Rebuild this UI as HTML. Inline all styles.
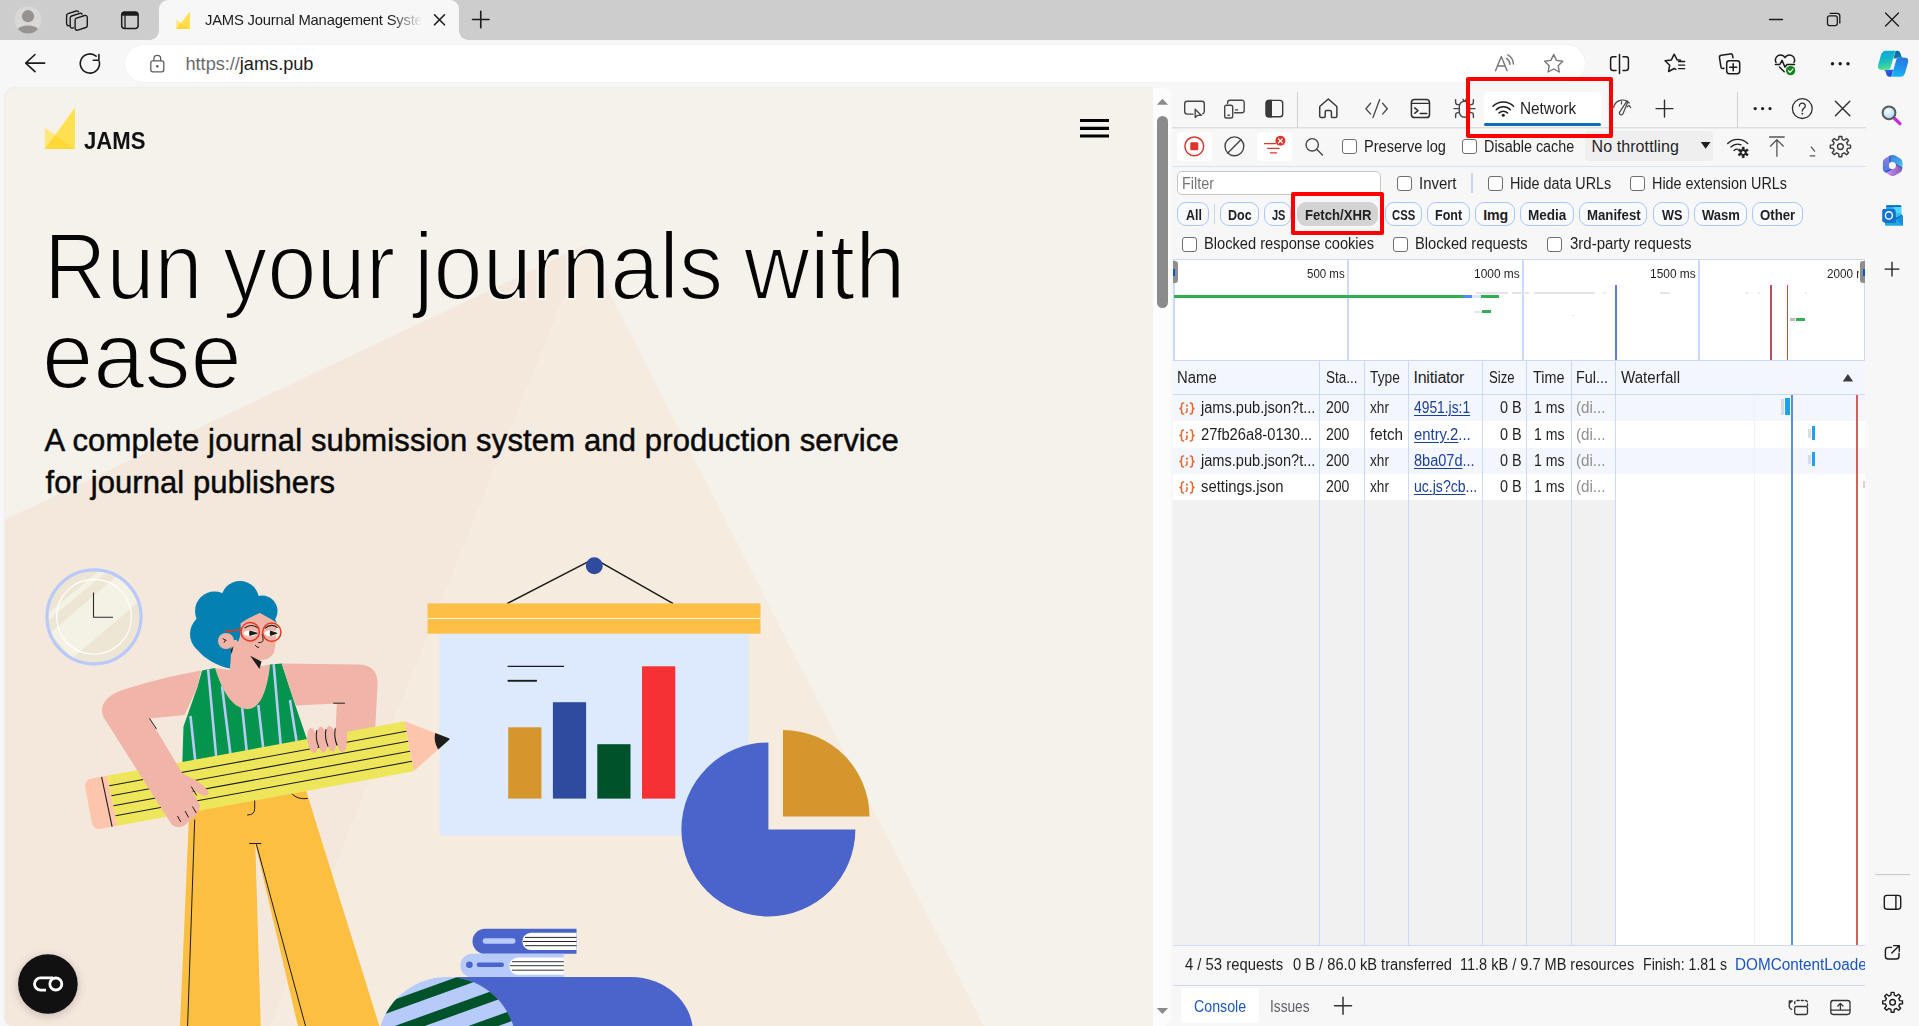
<!DOCTYPE html>
<html lang="en">
<head>
<meta charset="utf-8">
<title>JAMS Journal Management System</title>
<style>
*{box-sizing:border-box;margin:0;padding:0}
html,body{width:1919px;height:1026px;overflow:hidden;background:#f7f7f7;font-family:"Liberation Sans",sans-serif;color:#1b1b1b}
.abs{position:absolute}
svg{position:absolute;overflow:visible}
.ic{fill:none;stroke:#1b1b1b;stroke-width:1.5;stroke-linecap:round;stroke-linejoin:round}
#tabbar{left:0;top:0;width:1919px;height:40px;background:#cdcdcd}
#tab{left:159px;top:0;width:300px;height:40px;background:#f7f7f7;border-radius:9px 9px 0 0}
#tab:before,#tab:after{content:"";position:absolute;bottom:0;width:9px;height:9px;background:radial-gradient(circle at 0 0,#cdcdcd 8.5px,#f7f7f7 9px)}
#tab:before{left:-9px}
#tab:after{right:-9px;background:radial-gradient(circle at 100% 0,#cdcdcd 8.5px,#f7f7f7 9px)}
#toolbar{left:0;top:40px;width:1919px;height:48px;background:#f7f7f7}
#addr{left:125px;top:45px;width:1460px;height:37px;border-radius:18.5px;background:#fff;box-shadow:0 0 2px rgba(0,0,0,.06)}
/* page */
#page{left:5px;top:88px;width:1148.200px;height:938px;background:#f5f1eb;border-radius:10px 0 0 8px;overflow:hidden;box-shadow:0 0 2px rgba(0,0,0,.13)}
#vscroll{left:1153px;top:88px;width:18.200px;height:938px;background:#fcfcfc;border-radius:0 8px 8px 0}
#thumb{left:1157px;top:116px;width:11px;height:192px;border-radius:5.500px;background:#8b8b8b}
/* devtools */
.tx{position:absolute;white-space:nowrap}
.tx u{text-decoration-thickness:1px;text-underline-offset:2px}
.cb{position:absolute;width:15px;height:15px;border:1.300px solid #6f6f6f;border-radius:3px;background:#fff}
#side{left:1866px;top:88px;width:53px;height:938px;background:#f7f7f7}
</style>
</head>
<body>
<div id="tabbar" class="abs"></div>
<div id="tab" class="abs"></div>
<div id="toolbar" class="abs"></div>
<div id="addr" class="abs"></div>
<span id="t78" class="tx " style="left:205.00px;top:9.8px;font-size:14.8px;line-height:20px;color:#1b1b1b;font-weight:400;letter-spacing:-0.21px;-webkit-mask-image:linear-gradient(90deg,#000 186px,transparent 217px);mask-image:linear-gradient(90deg,#000 186px,transparent 217px);width:219px;overflow:hidden;">JAMS Journal Management System</span>
<span id="t79" class="tx " style="left:185.50px;top:51.7px;font-size:18.2px;line-height:24px;color:#1b1b1b;font-weight:400;letter-spacing:-0.03px;"><span style="color:#6b6b6b">https://</span>jams.pub</span>

<div id="page" class="abs">
<svg class="abs" style="left:-5px;top:-88px" width="1157" height="1026" viewBox="0 0 1157 1026">
<defs>
<filter id="blur5" x="-50%" y="-50%" width="200%" height="200%"><feGaussianBlur stdDeviation="5"/></filter>
<clipPath id="ckc"><circle cx="94" cy="616.800" r="46"/></clipPath>
<clipPath id="ballc"><circle cx="447" cy="1046.500" r="69.500"/></clipPath>
<clipPath id="tankc"><path d="M202 670.400L215 668C222 690 232 709 247.800 709C262 709 268 685 270 664.600L281.700 663.400L289 686L295.500 705.700L307.400 740.600L182.300 763L183.500 726.500L197.500 686.800Z"/></clipPath>
</defs>
<!-- pyramid background -->
<path d="M585 245L0 522V1026H271Z" fill="#f4e8dd"/>
<path d="M585 245L271 1026H984Z" fill="#f5ecdf"/>
<!-- clock -->
<circle cx="94" cy="616.800" r="47" fill="#ede6d5"/>
<g clip-path="url(#ckc)" fill="#f4f1e5"><path d="M40 620L105 566L108.500 570L43.500 624.500Z"/><path d="M50 633L118 575L141 600L72 658.500Z"/></g>
<circle cx="94" cy="616.800" r="47" fill="none" stroke="#b9c9fa" stroke-width="3.200"/>
<circle cx="94" cy="616.800" r="37.400" fill="none" stroke="#fff" stroke-width="1.100"/>
<path d="M93.500 592.600V617.200H113" fill="none" stroke="#2a2a2a" stroke-width="1.100"/>
<!-- board -->
<path d="M507 603.600L594.200 558.600L673.200 603.600" stroke="#1d1d1b" stroke-width="1.600" fill="none" stroke-linejoin="round"/>
<circle cx="594.300" cy="565.700" r="8.500" fill="#2e4ba0"/>
<rect x="439.600" y="630" width="308.800" height="205.500" fill="#dde9fd"/>
<rect x="427.500" y="603.400" width="333" height="30.300" fill="#fdbf45"/>
<rect x="427.500" y="618" width="333" height="1.100" fill="#fff6df"/>
<path d="M507.600 666.300H564.100" stroke="#1d1d1b" stroke-width="1.300"/><path d="M507.600 680.800H536.900" stroke="#1d1d1b" stroke-width="1.900"/>
<rect x="508.200" y="727.300" width="33.200" height="71.300" fill="#d6962e"/>
<rect x="552.900" y="702.200" width="33.200" height="96.400" fill="#2e4ba0"/>
<rect x="597.300" y="744.200" width="33.200" height="54.400" fill="#00522a"/>
<rect x="642" y="666.300" width="33.300" height="132.300" fill="#f63134"/>
<!-- pie -->
<path d="M768.400 829.400V742.400A87 87 0 1 0 855.400 829.400Z" fill="#4a64cc"/>
<path d="M783 816.500V730A86.500 86.500 0 0 1 869.500 816.500Z" fill="#d6962e"/>
<!-- blue mound + books + ball -->
<path d="M455 977.100H631A62 56 0 0 1 693 1033H455Z" fill="#4a64cc"/>
<circle cx="447" cy="1046.500" r="69.500" fill="#b6cbfa"/>
<g clip-path="url(#ballc)" fill="#00522a">
<path d="M360 1012L520 954.400V965.400L360 1023Z"/>
<path d="M360 1038.500L520 980.900V991.700L360 1049.300Z"/>
<path d="M360 1065L520 1007.400V1018.200L360 1075.800Z"/>
</g>
<path d="M485 928.800H576.500V953.800H485A12.500 12.500 0 0 1 485 928.800Z" fill="#4a64cc"/>
<rect x="482.700" y="938.300" width="32.800" height="5.400" rx="2.700" fill="#b6cbfa"/>
<path d="M531 932.800H576.500V950.100H531A8.650 8.650 0 0 1 531 932.800Z" fill="#fff"/>
<path d="M525 937.400H576.500M523 941.500H576.500M525 945.700H576.500" stroke="#222" stroke-width="1"/>
<path d="M472 953.800H563.700V977.100H472A11.650 11.650 0 0 1 472 953.800Z" fill="#b6cbfa"/>
<circle cx="469.400" cy="964.700" r="3.300" fill="#4a64cc"/>
<rect x="476.700" y="962.500" width="27.300" height="4.400" rx="2.200" fill="#4a64cc"/>
<path d="M518 957.400H563.700V974.700H518A8.650 8.650 0 0 1 518 957.400Z" fill="#fff"/>
<path d="M512 961.700H563.700M510 965.700H563.700M512 970.200H563.700" stroke="#333" stroke-width="1"/>
<!-- pants -->
<path d="M189 795L301.200 775L379.400 1026H297.900L255.300 844L260.700 1026H179.900L188.800 820.800Z" fill="#fdbf41"/>
<path d="M194.700 819.600L187.600 1026M249.200 843.500H261.200M256.400 844.300L305.500 1026M254.700 800v8.500q0 6.500-7.500 6.500M290.700 792.500q6 7.500 17 6" stroke="#1d1d1b" stroke-width="1" fill="none"/>
<!-- hair back -->
<g fill="#0580b2">
<circle cx="214.500" cy="611" r="19.500"/><circle cx="240" cy="600" r="19"/><circle cx="262" cy="611" r="15.500"/><circle cx="211" cy="634" r="21"/>
<path d="M196 648C205 660 218 666 230 668.500L236 640L250 600L200 620Z"/>
</g>
<!-- neck + face -->
<path d="M231.800 640L230 670L215 668C222 690 232 709 247.800 709C262 709 268 685 270 664.600L259.800 666.500L259 660C266 661 272 657 274 652C276 646 275.500 640 276 634L276.300 622L259.800 612.800L240 622L236 640Z" fill="#f0b5a8"/>
<circle cx="226" cy="641" r="8" fill="#f0b5a8"/>
<path d="M222.500 638.500l4 2.200M225.500 639.800l-1.500 3" stroke="#1d1d1b" stroke-width=".9" fill="none"/>
<!-- hair front -->
<path d="M277 623C270 618 264 615 259.800 612.800C252 616 245 620 240.500 623.500C241 630 241 636 238 642L232 634L228 620L245 604L268 606Z" fill="#0580b2"/>
<!-- face details -->
<path d="M250.200 655.800L261.500 661.500L259.500 669Z" fill="#1d1d1b"/>
<path d="M233.600 646.100L231.600 654.200L230.700 649.800Z" fill="#1d1d1b"/>
<ellipse cx="250.400" cy="633.300" rx="6.800" ry="2.900" fill="#fff"/><ellipse cx="270.800" cy="633.300" rx="6.400" ry="2.900" fill="#fff"/>
<path d="M249.600 630.500Q248.600 633.300 249.600 636.100L257.300 633.700Q257.800 633.200 257.200 632.700Z" fill="#1d1d1b"/><path d="M270.200 630.500Q269.200 633.300 270.200 636.100L277 633.700Q277.500 633.200 276.900 632.700Z" fill="#1d1d1b"/>
<path d="M244.500 628.200Q250.800 622.800 258.600 628.400M264.900 628.400Q271.200 622.800 277.600 627.800" stroke="#1d1d1b" stroke-width="1.100" fill="none"/>
<path d="M262 633.800Q264 640.300 262.400 641.600Q260.600 642.900 258.300 642.600M255.100 645.100q1.800 2.500 3.900 2.300" stroke="#1d1d1b" stroke-width="1" fill="none"/>
<g fill="none" stroke="#e33a22" stroke-width="1.500"><circle cx="250.200" cy="631.700" r="9.200"/><circle cx="271.800" cy="632.200" r="9.200"/><path d="M225 631.400L241.200 629.600"/></g>
<!-- tank top -->
<path d="M202 670.400L215 668C222 690 232 709 247.800 709C262 709 268 685 270 664.600L281.700 663.400L289 686L295.500 705.700L307.400 740.600L182.300 763L183.500 726.500L197.500 686.800Z" fill="#04944d"/>
<g clip-path="url(#tankc)" stroke="#b9c9fa" stroke-width="2.600" fill="none">
<path d="M208 668L216.400 759M222 686L230.400 754M241.900 705L246.800 752M258.300 705L263.200 748M273.500 662L280.700 745M290 700L296.500 741M190.500 716L195.300 761"/>
</g>
<!-- arms -->
<path d="M281.700 663.400L358 664.400Q377.600 664.600 377.600 683.300L375.300 728L335.500 736L336.700 703.600L296 705.500L289 686Z" fill="#f0b5a8"/>
<path d="M333.200 703.200H344.900" stroke="#1d1d1b" stroke-width="1" fill="none"/>
<!-- pencil -->
<g transform="translate(101.600 776.800) rotate(-10.400)">
<path d="M5.500 0H-10Q-18 0 -18 8V43Q-18 51 -10 51H6.800Z" fill="#fdc5ab"/>
<path d="M5.500 0H308V51H6.800Z" fill="#ede55a"/>
<path d="M308 0L349.500 25.500L308 51Z" fill="#fdc5ab"/>
<path d="M336 17.200L348.600 24.700Q349.800 25.500 348.600 26.300L336 33.800Q332.500 25.500 336 17.200Z" fill="#1d1d1b"/>
<path d="M0 0L1.300 51M6 10.200H308M6.200 20.400H308M6.500 30.600H308M6.700 40.800H308" stroke="#1d1d1b" stroke-width="1.100" fill="none"/>
</g>
<!-- hands over pencil -->
<path d="M201 670.400C170 676 140 684 121.500 690.300C106 696 98 706 104 718L170 822C173 828 181 829 186 824L197.500 814.300L200 806L192 790L203 795.500C206 796.500 209.500 795 208.500 792C206 787 198 781 191.600 778L182.300 773.300L149.500 718.400L184.600 714.900L197.500 686.800Z" fill="#f0b5a8"/>
<path d="M149.500 718.400L156.500 728.900M191.200 786.500l5.500 9M177.500 816l3.300 6M185 811l3.600 6.500M192.500 806.500l3.800 6.500" stroke="#1d1d1b" stroke-width="1" fill="none"/>
<g fill="#f0b5a8">
<ellipse cx="312.600" cy="740.600" rx="5.100" ry="12.800" transform="rotate(-8 312.600 740.600)"/>
<ellipse cx="322.200" cy="739.600" rx="5.200" ry="12.900" transform="rotate(-8 322.200 739.600)"/>
<ellipse cx="331" cy="738.700" rx="5.200" ry="12.900" transform="rotate(-8 331 738.700)"/>
<path d="M334.500 727.500L346 726C347.500 734 347.800 742 345.500 749C344.500 752.500 340.500 753 338.800 749.500C336.800 744 335.500 736 334.500 727.500Z"/>
</g>
<path d="M316.800 730.200q-1.700 8.700 2.100 17.200M326 729.200q-1.700 8.700 2.100 17.200M335.300 728.500q-1.700 8.700 1.900 17" stroke="#1d1d1b" stroke-width="1.100" fill="none"/>
<!-- cookie button -->
<circle cx="47.900" cy="986" r="30" fill="#5a4030" opacity=".28" filter="url(#blur5)"/>
<circle cx="47.900" cy="984" r="29.800" fill="#111"/>
<circle cx="55.800" cy="984" r="6" fill="none" stroke="#fff" stroke-width="2.800"/>
<path d="M53 977.900H40.600a6.100 6.100 0 0 0 0 12.200H46" fill="none" stroke="#fff" stroke-width="2.800"/>
<!-- logo -->
<path d="M75 107.400V148.900H44.900Z" fill="#fee050"/>
<path d="M44.900 127.800V148.900H75Z" fill="#ffe877"/>
<path d="M44.900 148.900L55.040 134.900L75 148.900Z" fill="#ffd737"/>
<!-- hamburger -->
<path d="M1080 120.550H1109M1080 128.400H1109M1080 136.050H1109" stroke="#000" stroke-width="3.100"/>
</svg>

</div>
<span id="t70" class="tx h1" style="left:44.47px;top:204.1px;font-size:94px;line-height:126px;color:#050505;font-weight:400;letter-spacing:0px;transform:scaleX(0.9191);transform-origin:0 50%;-webkit-text-stroke:2.2px #f5f1eb;">Run</span>
<span id="t71" class="tx h1" style="left:222.70px;top:204.1px;font-size:94px;line-height:126px;color:#050505;font-weight:400;letter-spacing:0px;transform:scaleX(0.9413);transform-origin:0 50%;-webkit-text-stroke:2.2px #f5f1eb;">your</span>
<span id="t72" class="tx h1" style="left:413.72px;top:204.1px;font-size:94px;line-height:126px;color:#050505;font-weight:400;letter-spacing:0px;transform:scaleX(0.9387);transform-origin:0 50%;-webkit-text-stroke:2.2px #f5f1eb;">journals</span>
<span id="t73" class="tx h1" style="left:744.27px;top:204.1px;font-size:94px;line-height:126px;color:#050505;font-weight:400;letter-spacing:0px;transform:scaleX(0.9669);transform-origin:0 50%;-webkit-text-stroke:2.2px #f5f1eb;">with</span>
<span id="t74" class="tx h1" style="left:41.98px;top:293.3px;font-size:94px;line-height:126px;color:#050505;font-weight:400;letter-spacing:0px;transform:scaleX(0.9804);transform-origin:0 50%;-webkit-text-stroke:2.2px #f5f1eb;">ease</span>
<span id="t75" class="tx " style="left:44.60px;top:419.8px;font-size:31px;line-height:42px;color:#0a0a0a;font-weight:400;letter-spacing:0.14px;-webkit-text-stroke:.5px #0a0a0a;">A complete journal submission system and production service</span>
<span id="t76" class="tx " style="left:45.60px;top:462.3px;font-size:31px;line-height:42px;color:#0a0a0a;font-weight:400;letter-spacing:0.08px;-webkit-text-stroke:.5px #0a0a0a;">for journal publishers</span>
<span id="t77" class="tx " style="left:83.60px;top:124.9px;font-size:24.2px;line-height:32px;color:#111;font-weight:700;letter-spacing:0px;transform:scaleX(0.914);transform-origin:0 50%;">JAMS</span>
<div id="vscroll" class="abs"></div>
<div id="thumb" class="abs"></div>
<svg class="abs" style="left:0;top:0" width="1919" height="1026"><path d="M1156.800 104.800h11.300l-5.650-6z M1156.800 1008h11.300l-5.650 6z" fill="#8b8b8b"/></svg>

<div class="abs" style="left:1172.0px;top:88.0px;width:694.0px;height:938.0px;background:#f7f7f7;border-radius:8px 0 0 0"></div>
<div class="abs" style="left:1172.0px;top:127.0px;width:694.0px;height:1.0px;background:#dcdcdc;"></div>
<div class="abs" style="left:1172.0px;top:128.0px;width:694.0px;height:1.0px;background:#ececec;"></div>
<div class="abs" style="left:1297.0px;top:92.0px;width:1.0px;height:35.0px;background:#d0d0d0;"></div>
<div class="abs" style="left:1737.0px;top:92.0px;width:1.0px;height:35.0px;background:#d0d0d0;"></div>
<div class="abs" style="left:1484.0px;top:91.5px;width:117.0px;height:34.5px;background:#fff;border-radius:4px 4px 0 0"></div>
<div class="abs" style="left:1484.0px;top:123.0px;width:117.0px;height:3.0px;background:#0f6cbd;border-radius:2px"></div>
<span id="t0" class="tx " style="left:1520.34px;top:98.2px;font-size:16px;line-height:21px;color:#1f1f1f;font-weight:400;letter-spacing:0px;transform:scaleX(0.958);transform-origin:0 50%;">Network</span>
<div class="abs" style="left:1172.0px;top:166.0px;width:694.0px;height:1.0px;background:#d3e3fd;"></div>
<div class="abs" style="left:1177.0px;top:131.5px;width:35.0px;height:29.0px;background:#fff;border-radius:4px"></div>
<div class="abs" style="left:1257.0px;top:131.5px;width:35.0px;height:29.0px;background:#fff;border-radius:4px"></div>
<div class="cb" style="left:1342.1px;top:139.1px"></div>
<span id="t1" class="tx " style="left:1364.29px;top:135.8px;font-size:16px;line-height:21px;color:#1f1f1f;font-weight:400;letter-spacing:0px;transform:scaleX(0.912);transform-origin:0 50%;">Preserve log</span>
<div class="cb" style="left:1462.1px;top:139.1px"></div>
<span id="t2" class="tx " style="left:1484.40px;top:135.8px;font-size:16px;line-height:21px;color:#1f1f1f;font-weight:400;letter-spacing:0px;transform:scaleX(0.898);transform-origin:0 50%;">Disable cache</span>
<div class="abs" style="left:1585.0px;top:131.0px;width:128.0px;height:30.0px;background:#efefef;border-radius:4px"></div>
<span id="t3" class="tx " style="left:1591.50px;top:135.8px;font-size:16px;line-height:21px;color:#1f1f1f;font-weight:400;letter-spacing:0.09px;">No throttling</span>
<svg class="abs" style="left:0;top:0" width="1919" height="300"><path d="M1700.800 142h9.700l-4.850 6.800z" fill="#1f1f1f"/></svg>
<div class="abs" style="left:1177.3px;top:171.0px;width:203.7px;height:24.0px;background:#fff;border:1px solid #c4c7c5;border-radius:5px"></div>
<span id="t4" class="tx " style="left:1181.70px;top:173.2px;font-size:16px;line-height:21px;color:#757575;font-weight:400;letter-spacing:0px;transform:scaleX(0.900);transform-origin:0 50%;">Filter</span>
<div class="cb" style="left:1396.9px;top:176.0px"></div>
<span id="t5" class="tx " style="left:1419.26px;top:172.8px;font-size:16px;line-height:21px;color:#1f1f1f;font-weight:400;letter-spacing:0px;transform:scaleX(0.938);transform-origin:0 50%;">Invert</span>
<div class="abs" style="left:1471.3px;top:173.0px;width:1.3px;height:20.0px;background:#c5d6f5;"></div>
<div class="cb" style="left:1487.9px;top:176.0px"></div>
<span id="t6" class="tx " style="left:1509.70px;top:172.8px;font-size:16px;line-height:21px;color:#1f1f1f;font-weight:400;letter-spacing:0px;transform:scaleX(0.896);transform-origin:0 50%;">Hide data URLs</span>
<div class="cb" style="left:1629.9px;top:176.0px"></div>
<span id="t7" class="tx " style="left:1652.40px;top:172.8px;font-size:16px;line-height:21px;color:#1f1f1f;font-weight:400;letter-spacing:0px;transform:scaleX(0.898);transform-origin:0 50%;">Hide extension URLs</span>
<div class="abs" style="left:1177.3px;top:202.4px;width:31.4px;height:24.0px;background:#f9fafd;border:1px solid #a8c7fa;border-radius:9px"></div>
<span id="t8" class="tx pill" style="left:1185.50px;top:205.8px;font-size:14.2px;line-height:19px;color:#1f1f1f;font-weight:700;letter-spacing:0px;transform:scaleX(0.879);transform-origin:0 50%;">All</span>
<div class="abs" style="left:1220.2px;top:202.4px;width:38.6px;height:24.0px;background:#f9fafd;border:1px solid #a8c7fa;border-radius:9px"></div>
<span id="t9" class="tx pill" style="left:1228.00px;top:205.8px;font-size:14.2px;line-height:19px;color:#1f1f1f;font-weight:700;letter-spacing:0px;transform:scaleX(0.881);transform-origin:0 50%;">Doc</span>
<div class="abs" style="left:1264.3px;top:202.4px;width:27.0px;height:24.0px;background:#f9fafd;border:1px solid #a8c7fa;border-radius:9px"></div>
<span id="t10" class="tx pill" style="left:1271.80px;top:205.8px;font-size:14.2px;line-height:19px;color:#1f1f1f;font-weight:700;letter-spacing:0px;transform:scaleX(0.776);transform-origin:0 50%;">JS</span>
<div class="abs" style="left:1297.1px;top:202.4px;width:81.4px;height:24.0px;background:#d3d3d3;border-radius:9px"></div>
<span id="t11" class="tx pill" style="left:1305.30px;top:205.8px;font-size:14.2px;line-height:19px;color:#1f1f1f;font-weight:700;letter-spacing:0px;transform:scaleX(0.926);transform-origin:0 50%;">Fetch/XHR</span>
<div class="abs" style="left:1385.2px;top:202.4px;width:36.5px;height:24.0px;background:#f9fafd;border:1px solid #a8c7fa;border-radius:9px"></div>
<span id="t12" class="tx pill" style="left:1391.60px;top:205.8px;font-size:14.2px;line-height:19px;color:#1f1f1f;font-weight:700;letter-spacing:0px;transform:scaleX(0.794);transform-origin:0 50%;">CSS</span>
<div class="abs" style="left:1427.2px;top:202.4px;width:42.5px;height:24.0px;background:#f9fafd;border:1px solid #a8c7fa;border-radius:9px"></div>
<span id="t13" class="tx pill" style="left:1435.40px;top:205.8px;font-size:14.2px;line-height:19px;color:#1f1f1f;font-weight:700;letter-spacing:0px;transform:scaleX(0.881);transform-origin:0 50%;">Font</span>
<div class="abs" style="left:1475.0px;top:202.4px;width:39.7px;height:24.0px;background:#f9fafd;border:1px solid #a8c7fa;border-radius:9px"></div>
<span id="t14" class="tx pill" style="left:1483.30px;top:205.8px;font-size:14.2px;line-height:19px;color:#1f1f1f;font-weight:700;letter-spacing:-0.23px;">Img</span>
<div class="abs" style="left:1520.2px;top:202.4px;width:53.5px;height:24.0px;background:#f9fafd;border:1px solid #a8c7fa;border-radius:9px"></div>
<span id="t15" class="tx pill" style="left:1528.00px;top:205.8px;font-size:14.2px;line-height:19px;color:#1f1f1f;font-weight:700;letter-spacing:0px;transform:scaleX(0.955);transform-origin:0 50%;">Media</span>
<div class="abs" style="left:1579.4px;top:202.4px;width:68.1px;height:24.0px;background:#f9fafd;border:1px solid #a8c7fa;border-radius:9px"></div>
<span id="t16" class="tx pill" style="left:1587.20px;top:205.8px;font-size:14.2px;line-height:19px;color:#1f1f1f;font-weight:700;letter-spacing:0px;transform:scaleX(0.932);transform-origin:0 50%;">Manifest</span>
<div class="abs" style="left:1653.3px;top:202.4px;width:35.3px;height:24.0px;background:#f9fafd;border:1px solid #a8c7fa;border-radius:9px"></div>
<span id="t17" class="tx pill" style="left:1661.60px;top:205.8px;font-size:14.2px;line-height:19px;color:#1f1f1f;font-weight:700;letter-spacing:0px;transform:scaleX(0.893);transform-origin:0 50%;">WS</span>
<div class="abs" style="left:1694.4px;top:202.4px;width:52.4px;height:24.0px;background:#f9fafd;border:1px solid #a8c7fa;border-radius:9px"></div>
<span id="t18" class="tx pill" style="left:1702.10px;top:205.8px;font-size:14.2px;line-height:19px;color:#1f1f1f;font-weight:700;letter-spacing:0px;transform:scaleX(0.920);transform-origin:0 50%;">Wasm</span>
<div class="abs" style="left:1752.2px;top:202.4px;width:50.5px;height:24.0px;background:#f9fafd;border:1px solid #a8c7fa;border-radius:9px"></div>
<span id="t19" class="tx pill" style="left:1759.90px;top:205.8px;font-size:14.2px;line-height:19px;color:#1f1f1f;font-weight:700;letter-spacing:0px;transform:scaleX(0.932);transform-origin:0 50%;">Other</span>
<div class="abs" style="left:1214.0px;top:204.0px;width:1.0px;height:20.0px;background:#c5d6f5;"></div>
<div class="cb" style="left:1181.6px;top:237.1px"></div>
<span id="t20" class="tx " style="left:1204.29px;top:233.4px;font-size:16px;line-height:21px;color:#1f1f1f;font-weight:400;letter-spacing:0px;transform:scaleX(0.915);transform-origin:0 50%;">Blocked response cookies</span>
<div class="cb" style="left:1392.6px;top:237.1px"></div>
<span id="t21" class="tx " style="left:1415.28px;top:233.4px;font-size:16px;line-height:21px;color:#1f1f1f;font-weight:400;letter-spacing:0px;transform:scaleX(0.918);transform-origin:0 50%;">Blocked requests</span>
<div class="cb" style="left:1546.8px;top:237.1px"></div>
<span id="t22" class="tx " style="left:1569.80px;top:233.4px;font-size:16px;line-height:21px;color:#1f1f1f;font-weight:400;letter-spacing:0px;transform:scaleX(0.936);transform-origin:0 50%;">3rd-party requests</span>
<svg class="abs" style="left:0;top:0" width="1919" height="1026" viewBox="0 0 1919 1026"><g fill="none" stroke="#474747" stroke-width="1.4" stroke-linecap="round" stroke-linejoin="round">
<path d="M1193 114.100h-5.800a2.500 2.500 0 0 1-2.500-2.500v-7.800a2.500 2.500 0 0 1 2.500-2.500h14.600a2.500 2.500 0 0 1 2.500 2.500v7.800a2.500 2.500 0 0 1-1.600 2.300"/><path d="M1195.200 109.300v8.300l2.300-2.200h3.900z"/>
<path d="M1227.600 103.500v-1a2.300 2.300 0 0 1 2.300-2.300h12a2.300 2.300 0 0 1 2.300 2.300v8a2.300 2.300 0 0 1-2.300 2.300h-7.300M1235.500 109.900h2.200"/><rect x="1224.700" y="105.300" width="8" height="12.700" rx="1.800"/><path d="M1228 115.300h1.400"/>
<rect x="1266.200" y="100.400" width="16.500" height="16.400" rx="2.800" stroke="#3a3a3a"/><path d="M1269 100.400h2.300v16.400h-2.300a2.800 2.800 0 0 1-2.800-2.800v-10.800a2.800 2.800 0 0 1 2.800-2.800z" fill="#3a3a3a" stroke="#3a3a3a"/>
<path d="M1328.300 99l-8 7a1.800 1.800 0 0 0-.6 1.300v8.700a1.600 1.600 0 0 0 1.600 1.600h2.900a1 1 0 0 0 1-1v-4.600a1.500 1.500 0 0 1 1.500-1.500h3.200a1.500 1.500 0 0 1 1.500 1.500v4.600a1 1 0 0 0 1 1h2.900a1.600 1.600 0 0 0 1.600-1.600v-8.700a1.800 1.800 0 0 0-.6-1.300z" stroke-width="1.500" stroke="#3a3a3a"/>
<path d="M1370.600 103.300l-4.700 5.400l4.700 5.400M1382.600 103.300l4.700 5.400l-4.700 5.400M1379.700 99.600l-6.700 18" stroke-width="1.300"/>
<rect x="1411.400" y="99.600" width="18.100" height="18" rx="3.200" stroke="#2e2e2e" stroke-width="1.500"/><path d="M1411.400 103.400h18.100" stroke="#2e2e2e" stroke-width="1.200"/><path d="M1414.700 107.900l3.300 2.700l-3.300 2.700M1420.200 113.400h6.600" stroke="#2e2e2e" stroke-width="1.500"/>
<path d="M1459.300 106.500a5.200 5.200 0 0 1 10.400 0v5.500a5.200 5.200 0 0 1-10.400 0z"/><path d="M1463 99.300l1 2M1466 99.300l-1 2M1454 108.600h5M1470 108.600h5M1455.600 99.600v2.600a2.400 2.400 0 0 0 2.400 2.400h1.400M1473.400 99.600v2.600a2.400 2.400 0 0 1-2.400 2.400h-1.400M1455.600 117.600v-2.600a2.400 2.400 0 0 1 2.400-2.400h1.300M1473.400 117.600v-2.600a2.400 2.400 0 0 0-2.400-2.400h-1.300"/>
<path d="M1493 106.200a14.500 14.500 0 0 1 20.600 0M1496.200 109.800a10 10 0 0 1 14.200 0M1499 113a6 6 0 0 1 8.600 0" stroke="#1f1f1f" stroke-width="1.500"/><circle cx="1503.300" cy="115.300" r="1.500" fill="#1f1f1f" stroke="none"/>
<g transform="translate(-2.300 0)"><path d="M1616 107.500a9 9 0 0 1 15.500-4.500M1633 107.600l-1.600-2.200l-1.800 1.400M1623.800 101.700v2.200" stroke-width="1.200"/><path d="M1629 101.300c.8-.4 1.300.1 1 .9l-4.600 11.300c-.6 1.500-2.400 1.800-3.200.8s-.5-2.300.6-3.400z" stroke-width="1.200"/></g>
<path d="M1656 108.600h17M1664.500 100.100v17" stroke="#2e2e2e" stroke-width="1.400"/>
<circle cx="1802.300" cy="108.600" r="9.900" stroke="#2e2e2e" stroke-width="1.300"/><path d="M1799.300 106a3 3 0 0 1 6 .2c0 2-3 2.400-3 4.800" stroke="#2e2e2e" stroke-width="1.300"/>
<path d="M1835.400 101.300l14.400 14.400M1849.800 101.300l-14.400 14.400" stroke="#2e2e2e" stroke-width="1.400"/>
<circle cx="1194.300" cy="146.300" r="9.400" stroke="#dc362e" stroke-width="1.500"/><rect x="1190.300" y="142.300" width="8" height="8" rx="1.300" fill="#dc362e" stroke="none"/>
<circle cx="1234.400" cy="146.300" r="9.400" stroke="#444" stroke-width="1.400"/><path d="M1241 139.700l-13.200 13.200" stroke="#444" stroke-width="1.400"/>
<path d="M1264.500 143.700h11M1267.600 148.300h11.400M1270.400 152.900h6.200" stroke="#dc362e" stroke-width="1.300"/><circle cx="1280.400" cy="140.800" r="5" fill="#dc362e" stroke="none"/><path d="M1278.500 138.900l3.800 3.800M1282.300 138.900l-3.800 3.800" stroke="#fff" stroke-width="1.300"/>
<circle cx="1312.200" cy="144.800" r="6.200" stroke-width="1.400"/><path d="M1316.700 149.300l5.800 5.800" stroke-width="1.400"/>
<path d="M1727.700 143.500a14.300 14.300 0 0 1 20 0M1731 147a9.500 9.500 0 0 1 10-2.200M1734 150.400a5 5 0 0 1 3.600-1.300" stroke="#1f1f1f" stroke-width="1.400"/>
<path d="M1769.600 137h14.600M1776.900 140v16.300M1770.600 146l6.300-6.300l6.300 6.300" stroke="#555" stroke-width="1.300"/>
<path d="M1811.300 147.100l3.300 4M1810.200 155.900h4.600" stroke="#555" stroke-width="1.300"/>
</g>
<circle cx="1755.2" cy="108.600" r="1.600" fill="#1f1f1f"/>
<circle cx="1762.6" cy="108.600" r="1.600" fill="#1f1f1f"/>
<circle cx="1770" cy="108.600" r="1.600" fill="#1f1f1f"/>
<circle cx="1802.300" cy="113.700" r=".9" fill="#2e2e2e"/>
<path d="M1742.21 149.36L1742.19 147.10L1744.21 147.10L1744.19 149.36L1745.34 150.02L1747.29 148.87L1748.30 150.62L1746.33 151.73L1746.33 153.07L1748.30 154.18L1747.29 155.93L1745.34 154.78L1744.19 155.44L1744.21 157.70L1742.19 157.70L1742.21 155.44L1741.06 154.78L1739.11 155.93L1738.10 154.18L1740.07 153.07L1740.07 151.73L1738.10 150.62L1739.11 148.87L1741.06 150.02Z" fill="#1f1f1f" stroke="#1f1f1f" stroke-width=".6" stroke-linejoin="round"/><circle cx="1743.200" cy="152.400" r="1.500" fill="#f7f7f7"/>
<path d="M1838.67 139.40L1838.96 136.50L1841.84 136.50L1842.13 139.40L1844.27 140.29L1846.52 138.44L1848.56 140.48L1846.71 142.73L1847.60 144.87L1850.50 145.16L1850.50 148.04L1847.60 148.33L1846.71 150.47L1848.56 152.72L1846.52 154.76L1844.27 152.91L1842.13 153.80L1841.84 156.70L1838.96 156.70L1838.67 153.80L1836.53 152.91L1834.28 154.76L1832.24 152.72L1834.09 150.47L1833.20 148.33L1830.30 148.04L1830.30 145.16L1833.20 144.87L1834.09 142.73L1832.24 140.48L1834.28 138.44L1836.53 140.29Z" fill="none" stroke="#3a3a3a" stroke-width="1.400" stroke-linejoin="round"/><circle cx="1840.400" cy="146.600" r="2.900" fill="none" stroke="#3a3a3a" stroke-width="1.400"/>
</svg>
<div class="abs" style="left:1173.0px;top:259.5px;width:692.0px;height:100.5px;background:#fff;"></div>
<div class="abs" style="left:1173.0px;top:259.0px;width:692.0px;height:1.2px;background:#c9dafb;"></div>
<div class="abs" style="left:1173.0px;top:359.8px;width:692.0px;height:1.2px;background:#c9dafb;"></div>
<div class="abs" style="left:1347.1px;top:260.0px;width:1.6px;height:100.0px;background:#c9dafb;"></div>
<div class="abs" style="left:1522.3px;top:260.0px;width:1.6px;height:100.0px;background:#c9dafb;"></div>
<div class="abs" style="left:1698.4px;top:260.0px;width:1.6px;height:100.0px;background:#c9dafb;"></div>
<div class="abs" style="left:1173.0px;top:260.0px;width:1.5px;height:100.0px;background:#c9dafb;"></div>
<div class="abs" style="left:1863.8px;top:260.0px;width:1.4px;height:100.0px;background:#c9dafb;"></div>
<span id="t23" class="tx " style="left:1306.70px;top:264.7px;font-size:13.2px;line-height:18px;color:#1f1f1f;font-weight:400;letter-spacing:0px;transform:scaleX(0.871);transform-origin:0 50%;">500 ms</span>
<span id="t24" class="tx " style="left:1473.90px;top:264.7px;font-size:13.2px;line-height:18px;color:#1f1f1f;font-weight:400;letter-spacing:0px;transform:scaleX(0.904);transform-origin:0 50%;">1000 ms</span>
<span id="t25" class="tx " style="left:1649.90px;top:264.7px;font-size:13.2px;line-height:18px;color:#1f1f1f;font-weight:400;letter-spacing:0px;transform:scaleX(0.904);transform-origin:0 50%;">1500 ms</span>
<div class="abs" style="left:1820px;top:262px;width:38.5px;height:22px;overflow:hidden">
<span id="t26" class="tx " style="left:6.50px;top:2.7px;font-size:13.2px;line-height:18px;color:#1f1f1f;font-weight:400;letter-spacing:0px;transform:scaleX(0.887);transform-origin:0 50%;">2000 ms</span>
</div>
<div class="abs" style="left:1173.4px;top:260.5px;width:4.8px;height:22.8px;background:#8e8e8e;border-radius:0 3px 3px 0"></div>
<div class="abs" style="left:1173.4px;top:268.7px;width:1.8px;height:7.3px;background:#0b57d0;"></div>
<div class="abs" style="left:1860.3px;top:260.5px;width:4.7px;height:22.8px;background:#8e8e8e;border-radius:3px 0 0 3px"></div>
<div class="abs" style="left:1863.2px;top:268.7px;width:1.8px;height:7.3px;background:#0b57d0;"></div>
<div class="abs" style="left:1174.0px;top:295.2px;width:288.6px;height:3.0px;background:#30b050;"></div>
<div class="abs" style="left:1462.6px;top:295.2px;width:9.4px;height:3.0px;background:#4f8df0;"></div>
<div class="abs" style="left:1472.0px;top:295.4px;width:9.0px;height:2.6px;background:#dbe7fb;"></div>
<div class="abs" style="left:1481.0px;top:295.2px;width:18.4px;height:3.0px;background:#30b050;"></div>
<div class="abs" style="left:1476.0px;top:291.6px;width:32.0px;height:2.4px;background:#e6e6e6;"></div>
<div class="abs" style="left:1512.0px;top:291.6px;width:16.7px;height:2.4px;background:#e6e6e6;"></div>
<div class="abs" style="left:1533.8px;top:291.6px;width:61.2px;height:2.4px;background:#e6e6e6;"></div>
<div class="abs" style="left:1603.0px;top:292.0px;width:3.0px;height:1.6px;background:#ececec;"></div>
<div class="abs" style="left:1660.0px;top:292.0px;width:10.0px;height:1.6px;background:#e6e6e6;"></div>
<div class="abs" style="left:1745.0px;top:292.0px;width:3.0px;height:1.6px;background:#ececec;"></div>
<div class="abs" style="left:1758.0px;top:292.0px;width:2.0px;height:1.6px;background:#ececec;"></div>
<div class="abs" style="left:1805.0px;top:292.0px;width:2.0px;height:1.6px;background:#ececec;"></div>
<div class="abs" style="left:1474.0px;top:310.8px;width:8.4px;height:2.2px;background:#e6e6e6;"></div>
<div class="abs" style="left:1482.4px;top:310.4px;width:9.1px;height:3.0px;background:#30b050;"></div>
<div class="abs" style="left:1572.0px;top:314.5px;width:1.5px;height:1.5px;background:#dfe8f8;"></div>
<div class="abs" style="left:1789.6px;top:318.2px;width:5.2px;height:2.8px;background:#bdbdbd;"></div>
<div class="abs" style="left:1795.8px;top:318.0px;width:9.6px;height:3.2px;background:#30b050;"></div>
<div class="abs" style="left:1614.8px;top:285.0px;width:1.8px;height:75.0px;background:#5b82c9;"></div>
<div class="abs" style="left:1770.2px;top:285.0px;width:2.1px;height:75.0px;background:#b4505f;"></div>
<div class="abs" style="left:1786.5px;top:285.0px;width:1.4px;height:75.0px;background:#d9453f;"></div>
<div class="abs" style="left:1173.0px;top:361.0px;width:692.0px;height:33.0px;background:#f3f6fc;"></div>
<div class="abs" style="left:1173.0px;top:394.0px;width:692.0px;height:1.0px;background:#c9dafb;"></div>
<div class="abs" style="left:1173.0px;top:395.0px;width:692.0px;height:26.3px;background:#f3f6fc;"></div>
<div class="abs" style="left:1173.0px;top:421.3px;width:692.0px;height:26.3px;background:#fff;"></div>
<div class="abs" style="left:1173.0px;top:447.6px;width:692.0px;height:26.2px;background:#f3f6fc;"></div>
<div class="abs" style="left:1173.0px;top:473.8px;width:692.0px;height:26.3px;background:#fff;"></div>
<div class="abs" style="left:1173.0px;top:500.1px;width:442.6px;height:444.9px;background:#f1f1f1;"></div>
<div class="abs" style="left:1615.6px;top:500.1px;width:249.4px;height:444.9px;background:#fff;"></div>
<div class="abs" style="left:1319.0px;top:361.0px;width:1.2px;height:584.0px;background:#c9dafb;"></div>
<div class="abs" style="left:1363.8px;top:361.0px;width:1.2px;height:584.0px;background:#c9dafb;"></div>
<div class="abs" style="left:1407.8px;top:361.0px;width:1.2px;height:584.0px;background:#c9dafb;"></div>
<div class="abs" style="left:1481.6px;top:361.0px;width:1.2px;height:584.0px;background:#c9dafb;"></div>
<div class="abs" style="left:1525.7px;top:361.0px;width:1.2px;height:584.0px;background:#c9dafb;"></div>
<div class="abs" style="left:1570.9px;top:361.0px;width:1.2px;height:584.0px;background:#c9dafb;"></div>
<div class="abs" style="left:1615.0px;top:361.0px;width:1.2px;height:584.0px;background:#c9dafb;"></div>
<div class="abs" style="left:1754.3px;top:395.0px;width:1.0px;height:550.0px;background:#eef2fb;"></div>
<div class="abs" style="left:1790.6px;top:395.0px;width:2.0px;height:550.0px;background:#5b8fdc;"></div>
<div class="abs" style="left:1856.0px;top:395.0px;width:2.0px;height:550.0px;background:#d4605e;"></div>
<div class="abs" style="left:1781.4px;top:399.0px;width:3.1px;height:16.0px;background:#d5dbe3;"></div>
<div class="abs" style="left:1785.4px;top:398.3px;width:4.3px;height:16.7px;background:#1ea1f1;"></div>
<div class="abs" style="left:1807.8px;top:428.7px;width:2.8px;height:9.5px;background:#d9dde2;"></div>
<div class="abs" style="left:1811.8px;top:425.7px;width:3.0px;height:14.5px;background:#1ea1f1;"></div>
<div class="abs" style="left:1807.8px;top:455.2px;width:2.8px;height:9.2px;background:#d9dde2;"></div>
<div class="abs" style="left:1811.8px;top:452.2px;width:3.0px;height:14.2px;background:#1ea1f1;"></div>
<div class="abs" style="left:1863.0px;top:481.4px;width:2.0px;height:6.6px;background:#d5d5d5;"></div>
<span id="t27" class="tx " style="left:1176.77px;top:366.7px;font-size:16px;line-height:21px;color:#1f1f1f;font-weight:400;letter-spacing:0px;transform:scaleX(0.929);transform-origin:0 50%;">Name</span>
<span id="t28" class="tx " style="left:1325.60px;top:366.7px;font-size:16px;line-height:21px;color:#1f1f1f;font-weight:400;letter-spacing:0px;transform:scaleX(0.847);transform-origin:0 50%;">Sta...</span>
<span id="t29" class="tx " style="left:1370.30px;top:366.7px;font-size:16px;line-height:21px;color:#1f1f1f;font-weight:400;letter-spacing:0px;transform:scaleX(0.859);transform-origin:0 50%;">Type</span>
<span id="t30" class="tx " style="left:1413.40px;top:366.7px;font-size:16px;line-height:21px;color:#1f1f1f;font-weight:400;letter-spacing:-0.18px;">Initiator</span>
<span id="t31" class="tx " style="left:1488.50px;top:366.7px;font-size:16px;line-height:21px;color:#1f1f1f;font-weight:400;letter-spacing:0px;transform:scaleX(0.820);transform-origin:0 50%;">Size</span>
<span id="t32" class="tx " style="left:1532.80px;top:366.7px;font-size:16px;line-height:21px;color:#1f1f1f;font-weight:400;letter-spacing:0px;transform:scaleX(0.898);transform-origin:0 50%;">Time</span>
<span id="t33" class="tx " style="left:1576.30px;top:366.7px;font-size:16px;line-height:21px;color:#1f1f1f;font-weight:400;letter-spacing:0px;transform:scaleX(0.900);transform-origin:0 50%;">Ful...</span>
<span id="t34" class="tx " style="left:1621.30px;top:366.7px;font-size:16px;line-height:21px;color:#1f1f1f;font-weight:400;letter-spacing:0px;transform:scaleX(0.944);transform-origin:0 50%;">Waterfall</span>
<svg class="abs" style="left:0;top:0" width="1919" height="400"><path d="M1842.700 381.400h10.400l-5.200-7.500z" fill="#3c3c3c"/></svg>
<svg class="abs" style="left:1179px;top:402.1px" width="16" height="13" viewBox="0 0 16 13"><g fill="none" stroke="#e8662a" stroke-width="1.5" stroke-linecap="round" stroke-linejoin="round"><path d="M4.6 1C3 1 2.600 1.800 2.600 3v1.600c0 1-.5 1.700-1.600 1.900c1.100.2 1.600.9 1.600 1.900V10c0 1.200.4 2 2 2"/><path d="M11.400 1c1.600 0 2 .8 2 2v1.600c0 1 .5 1.700 1.600 1.900c-1.100.2-1.600.9-1.600 1.900V10c0 1.200-.4 2-2 2"/></g><circle cx="8" cy="3.600" r="1.050" fill="#e8662a"/><path d="M8 6.700v2.100q0 1.200-1 1.700" fill="none" stroke="#e8662a" stroke-width="1.500" stroke-linecap="round"/></svg>
<span id="t35" class="tx " style="left:1201.01px;top:397.4px;font-size:16px;line-height:21px;color:#1f1f1f;font-weight:400;letter-spacing:0px;transform:scaleX(0.912);transform-origin:0 50%;">jams.pub.json?t...</span>
<span id="t36" class="tx " style="left:1325.60px;top:397.4px;font-size:16px;line-height:21px;color:#1f1f1f;font-weight:400;letter-spacing:0px;transform:scaleX(0.877);transform-origin:0 50%;">200</span>
<span id="t37" class="tx " style="left:1370.30px;top:397.4px;font-size:16px;line-height:21px;color:#1f1f1f;font-weight:400;letter-spacing:0px;transform:scaleX(0.852);transform-origin:0 50%;">xhr</span>
<span id="t38" class="tx " style="left:1414.40px;top:397.4px;font-size:16px;line-height:21px;color:#1b3f9e;font-weight:400;letter-spacing:0px;transform:scaleX(0.864);transform-origin:0 50%;"><u>4951.js:1</u></span>
<span id="t39" class="tx " style="left:1500.30px;top:397.4px;font-size:16px;line-height:21px;color:#1f1f1f;font-weight:400;letter-spacing:0px;transform:scaleX(0.900);transform-origin:0 50%;">0 B</span>
<span id="t40" class="tx " style="left:1534.42px;top:397.4px;font-size:16px;line-height:21px;color:#1f1f1f;font-weight:400;letter-spacing:0px;transform:scaleX(0.882);transform-origin:0 50%;">1 ms</span>
<span id="t41" class="tx " style="left:1576.25px;top:397.4px;font-size:16px;line-height:21px;color:#8f8f8f;font-weight:400;letter-spacing:0px;transform:scaleX(0.949);transform-origin:0 50%;">(di...</span>
<svg class="abs" style="left:1179px;top:428.5px" width="16" height="13" viewBox="0 0 16 13"><g fill="none" stroke="#e8662a" stroke-width="1.5" stroke-linecap="round" stroke-linejoin="round"><path d="M4.6 1C3 1 2.600 1.800 2.600 3v1.600c0 1-.5 1.700-1.600 1.900c1.100.2 1.600.9 1.600 1.900V10c0 1.200.4 2 2 2"/><path d="M11.400 1c1.600 0 2 .8 2 2v1.600c0 1 .5 1.700 1.600 1.900c-1.100.2-1.600.9-1.600 1.900V10c0 1.200-.4 2-2 2"/></g><circle cx="8" cy="3.600" r="1.050" fill="#e8662a"/><path d="M8 6.700v2.100q0 1.200-1 1.700" fill="none" stroke="#e8662a" stroke-width="1.500" stroke-linecap="round"/></svg>
<span id="t42" class="tx " style="left:1201.40px;top:423.8px;font-size:16px;line-height:21px;color:#1f1f1f;font-weight:400;letter-spacing:0px;transform:scaleX(0.919);transform-origin:0 50%;">27fb26a8-0130...</span>
<span id="t43" class="tx " style="left:1325.60px;top:423.8px;font-size:16px;line-height:21px;color:#1f1f1f;font-weight:400;letter-spacing:0px;transform:scaleX(0.877);transform-origin:0 50%;">200</span>
<span id="t44" class="tx " style="left:1370.30px;top:423.8px;font-size:16px;line-height:21px;color:#1f1f1f;font-weight:400;letter-spacing:0px;transform:scaleX(0.953);transform-origin:0 50%;">fetch</span>
<span id="t45" class="tx " style="left:1414.40px;top:423.8px;font-size:16px;line-height:21px;color:#1b3f9e;font-weight:400;letter-spacing:0px;transform:scaleX(0.928);transform-origin:0 50%;"><u>entry.2</u>...</span>
<span id="t46" class="tx " style="left:1500.30px;top:423.8px;font-size:16px;line-height:21px;color:#1f1f1f;font-weight:400;letter-spacing:0px;transform:scaleX(0.900);transform-origin:0 50%;">0 B</span>
<span id="t47" class="tx " style="left:1534.42px;top:423.8px;font-size:16px;line-height:21px;color:#1f1f1f;font-weight:400;letter-spacing:0px;transform:scaleX(0.882);transform-origin:0 50%;">1 ms</span>
<span id="t48" class="tx " style="left:1576.25px;top:423.8px;font-size:16px;line-height:21px;color:#8f8f8f;font-weight:400;letter-spacing:0px;transform:scaleX(0.949);transform-origin:0 50%;">(di...</span>
<svg class="abs" style="left:1179px;top:454.6px" width="16" height="13" viewBox="0 0 16 13"><g fill="none" stroke="#e8662a" stroke-width="1.5" stroke-linecap="round" stroke-linejoin="round"><path d="M4.6 1C3 1 2.600 1.800 2.600 3v1.600c0 1-.5 1.700-1.600 1.900c1.100.2 1.600.9 1.600 1.900V10c0 1.200.4 2 2 2"/><path d="M11.400 1c1.600 0 2 .8 2 2v1.600c0 1 .5 1.700 1.600 1.900c-1.100.2-1.600.9-1.600 1.900V10c0 1.200-.4 2-2 2"/></g><circle cx="8" cy="3.600" r="1.050" fill="#e8662a"/><path d="M8 6.700v2.100q0 1.200-1 1.700" fill="none" stroke="#e8662a" stroke-width="1.500" stroke-linecap="round"/></svg>
<span id="t49" class="tx " style="left:1201.01px;top:449.9px;font-size:16px;line-height:21px;color:#1f1f1f;font-weight:400;letter-spacing:0px;transform:scaleX(0.912);transform-origin:0 50%;">jams.pub.json?t...</span>
<span id="t50" class="tx " style="left:1325.60px;top:449.9px;font-size:16px;line-height:21px;color:#1f1f1f;font-weight:400;letter-spacing:0px;transform:scaleX(0.877);transform-origin:0 50%;">200</span>
<span id="t51" class="tx " style="left:1370.30px;top:449.9px;font-size:16px;line-height:21px;color:#1f1f1f;font-weight:400;letter-spacing:0px;transform:scaleX(0.852);transform-origin:0 50%;">xhr</span>
<span id="t52" class="tx " style="left:1414.40px;top:449.9px;font-size:16px;line-height:21px;color:#1b3f9e;font-weight:400;letter-spacing:0px;transform:scaleX(0.908);transform-origin:0 50%;"><u>8ba07d</u>...</span>
<span id="t53" class="tx " style="left:1500.30px;top:449.9px;font-size:16px;line-height:21px;color:#1f1f1f;font-weight:400;letter-spacing:0px;transform:scaleX(0.900);transform-origin:0 50%;">0 B</span>
<span id="t54" class="tx " style="left:1534.42px;top:449.9px;font-size:16px;line-height:21px;color:#1f1f1f;font-weight:400;letter-spacing:0px;transform:scaleX(0.882);transform-origin:0 50%;">1 ms</span>
<span id="t55" class="tx " style="left:1576.25px;top:449.9px;font-size:16px;line-height:21px;color:#8f8f8f;font-weight:400;letter-spacing:0px;transform:scaleX(0.949);transform-origin:0 50%;">(di...</span>
<svg class="abs" style="left:1179px;top:481.0px" width="16" height="13" viewBox="0 0 16 13"><g fill="none" stroke="#e8662a" stroke-width="1.5" stroke-linecap="round" stroke-linejoin="round"><path d="M4.6 1C3 1 2.600 1.800 2.600 3v1.600c0 1-.5 1.700-1.600 1.900c1.100.2 1.600.9 1.600 1.900V10c0 1.200.4 2 2 2"/><path d="M11.400 1c1.600 0 2 .8 2 2v1.600c0 1 .5 1.700 1.600 1.900c-1.100.2-1.600.9-1.600 1.900V10c0 1.200-.4 2-2 2"/></g><circle cx="8" cy="3.600" r="1.050" fill="#e8662a"/><path d="M8 6.700v2.100q0 1.200-1 1.700" fill="none" stroke="#e8662a" stroke-width="1.500" stroke-linecap="round"/></svg>
<span id="t56" class="tx " style="left:1201.40px;top:476.3px;font-size:16px;line-height:21px;color:#1f1f1f;font-weight:400;letter-spacing:0px;transform:scaleX(0.927);transform-origin:0 50%;">settings.json</span>
<span id="t57" class="tx " style="left:1325.60px;top:476.3px;font-size:16px;line-height:21px;color:#1f1f1f;font-weight:400;letter-spacing:0px;transform:scaleX(0.877);transform-origin:0 50%;">200</span>
<span id="t58" class="tx " style="left:1370.30px;top:476.3px;font-size:16px;line-height:21px;color:#1f1f1f;font-weight:400;letter-spacing:0px;transform:scaleX(0.852);transform-origin:0 50%;">xhr</span>
<span id="t59" class="tx " style="left:1413.52px;top:476.3px;font-size:16px;line-height:21px;color:#1b3f9e;font-weight:400;letter-spacing:0px;transform:scaleX(0.878);transform-origin:0 50%;"><u>uc.js?cb</u>...</span>
<span id="t60" class="tx " style="left:1500.30px;top:476.3px;font-size:16px;line-height:21px;color:#1f1f1f;font-weight:400;letter-spacing:0px;transform:scaleX(0.900);transform-origin:0 50%;">0 B</span>
<span id="t61" class="tx " style="left:1534.42px;top:476.3px;font-size:16px;line-height:21px;color:#1f1f1f;font-weight:400;letter-spacing:0px;transform:scaleX(0.882);transform-origin:0 50%;">1 ms</span>
<span id="t62" class="tx " style="left:1576.25px;top:476.3px;font-size:16px;line-height:21px;color:#8f8f8f;font-weight:400;letter-spacing:0px;transform:scaleX(0.949);transform-origin:0 50%;">(di...</span>
<div class="abs" style="left:1173.0px;top:945.0px;width:692.0px;height:1.0px;background:#c9dafb;"></div>
<div class="abs" style="left:1173.0px;top:985.0px;width:692.0px;height:1.0px;background:#c9dafb;"></div>
<span id="t63" class="tx " style="left:1184.50px;top:953.8px;font-size:16px;line-height:21px;color:#1f1f1f;font-weight:400;letter-spacing:0px;transform:scaleX(0.927);transform-origin:0 50%;">4 / 53 requests</span>
<span id="t64" class="tx " style="left:1292.50px;top:953.8px;font-size:16px;line-height:21px;color:#1f1f1f;font-weight:400;letter-spacing:0px;transform:scaleX(0.917);transform-origin:0 50%;">0 B / 86.0 kB transferred</span>
<span id="t65" class="tx " style="left:1459.69px;top:953.8px;font-size:16px;line-height:21px;color:#1f1f1f;font-weight:400;letter-spacing:0px;transform:scaleX(0.908);transform-origin:0 50%;">11.8 kB / 9.7 MB resources</span>
<span id="t66" class="tx " style="left:1642.52px;top:953.8px;font-size:16px;line-height:21px;color:#1f1f1f;font-weight:400;letter-spacing:0px;transform:scaleX(0.883);transform-origin:0 50%;">Finish: 1.81 s</span>
<div class="abs" style="left:1730px;top:950px;width:135px;height:34px;overflow:hidden">
<span id="t67" class="tx " style="left:4.64px;top:3.8px;font-size:16px;line-height:21px;color:#1a56c4;font-weight:400;letter-spacing:0px;transform:scaleX(0.956);transform-origin:0 50%;">DOMContentLoaded: 1.42 s</span>
</div>
<div class="abs" style="left:1180.6px;top:988.3px;width:78.4px;height:34.7px;background:#fff;border-radius:4px"></div>
<span id="t68" class="tx " style="left:1193.60px;top:996.0px;font-size:16px;line-height:21px;color:#1a56c4;font-weight:400;letter-spacing:0px;transform:scaleX(0.888);transform-origin:0 50%;">Console</span>
<span id="t69" class="tx " style="left:1269.94px;top:996.0px;font-size:16px;line-height:21px;color:#5f6368;font-weight:400;letter-spacing:0px;transform:scaleX(0.855);transform-origin:0 50%;">Issues</span>
<svg class="abs" style="left:1333px;top:996px" width="20" height="20"><path d="M1.500 9.800h17M10 1.300v17" class="ic" style="stroke-width:1.500;stroke:#333"/></svg>
<div class="abs" style="left:1465.800px;top:76.600px;width:147.700px;height:61.400px;border:4.300px solid #fe0000;border-radius:2px;z-index:9"></div>
<div class="abs" style="left:1291.300px;top:192.400px;width:93px;height:42.800px;border:4.500px solid #fe0000;border-radius:2px;z-index:9"></div>

<div id="side" class="abs"></div>
<svg class="abs" style="left:0;top:0" width="1919" height="88" viewBox="0 0 1919 88">
<!-- profile -->
<circle cx="28" cy="19.8" r="13.6" fill="#dad8d5"/>
<circle cx="28" cy="16.2" r="6.1" fill="#969391"/>
<path d="M18 29.2a10.6 5.4 0 0 1 20 0a13.6 13.6 0 0 1-20 0z" fill="#969391"/>
<!-- workspaces -->
<g class="ic" style="stroke-width:1.4">
<path d="M76.5 18.2l8.2-2.7a2 2 0 0 1 2.6 1.9v8.2a2 2 0 0 1-1.4 1.9l-8.2 2.7a2 2 0 0 1-2.6-1.9v-8.2a2 2 0 0 1 1.4-1.9z" fill="#cdcdcd"/>
<path d="M73.5 27.8l-.7.2a2 2 0 0 1-2.6-1.9v-8.200a2 2 0 0 1 1.400-1.900l8.200-2.700a2 2 0 0 1 2.300.800"/>
<path d="M69.500 25.600l-.3.100a2 2 0 0 1-2.600-1.900v-8.200a2 2 0 0 1 1.400-1.900l8.200-2.700a2 2 0 0 1 2.300.8"/>
</g>
<!-- tab actions -->
<rect x="121.700" y="12" width="16.400" height="16.400" rx="3" class="ic"/>
<path d="M121.700 15.800v-.8a3 3 0 0 1 3-3h10.400a3 3 0 0 1 3 3v.8z" fill="#1b1b1b"/>
<path d="M125 15.800v12.400" class="ic" style="stroke-width:1.300"/>
<!-- back -->
<path d="M35 54.500l-9.300 8.600l9.300 8.600M26 63.100h18.700" class="ic" style="stroke-width:1.600"/>
<!-- refresh -->
<path d="M99.300 61.600a9.600 9.600 0 1 1-3.200-5.400M98.900 54.600v5.600h-5.600" class="ic" style="stroke-width:1.600"/>
<!-- lock -->
<g class="ic" style="stroke:#5e5e5e;stroke-width:1.3">
<rect x="150.800" y="60.800" width="13" height="11" rx="2"/>
<path d="M153.900 60.600v-1.900a3.400 3.400 0 0 1 6.800 0v1.900"/>
<circle cx="157.300" cy="66.300" r=".7" fill="#5e5e5e"/>
</g>
<!-- favicon -->
<path d="M190 11.500V29H176.300Z" fill="#fee050"/>
<path d="M176.300 19.800V29H190Z" fill="#ffe877"/>
<path d="M176.300 29L180.900 23.100L190 29Z" fill="#ffd737"/>
<!-- tab close -->
<path d="M434.500 14.800l10 10m0-10l-10 10" class="ic" style="stroke-width:1.600"/>
<!-- new tab -->
<path d="M472.500 19.500h16.500m-8.250-8.250v16.500" class="ic" style="stroke-width:1.600"/>
<!-- window controls -->
<path d="M1769.500 19.500h13" class="ic" style="stroke-width:1.300"/>
<g class="ic" style="stroke-width:1.300"><rect x="1827.500" y="15.800" width="9.800" height="9.800" rx="2"/><path d="M1830.200 13.400h7a2.600 2.600 0 0 1 2.600 2.600v7"/></g>
<path d="M1885.500 13l13 13m0-13l-13 13" class="ic" style="stroke-width:1.300"/>
<!-- read aloud -->
<g class="ic" style="stroke:#767676;stroke-width:1.400">
<path d="M1495.500 70.700l5.800-14.200l5.800 14.200M1497.500 66h7.600"/>
<path d="M1506.400 58.400a7.500 7.500 0 0 1 3.600 6M1507.800 54.800a11 11 0 0 1 5.600 9.200"/>
</g>
<!-- star -->
<path d="M1553.700 54.600l2.800 5.800l6.300.9l-4.600 4.400l1.100 6.300l-5.600-3l-5.600 3l1.100-6.300l-4.600-4.400l6.300-.9z" class="ic" style="stroke:#767676;stroke-width:1.400"/>
<!-- split screen -->
<g class="ic" style="stroke-width:1.500">
<path d="M1616 56.700h-3a2.400 2.400 0 0 0-2.400 2.400v9a2.400 2.400 0 0 0 2.400 2.400h3M1623 56.700h3a2.400 2.400 0 0 1 2.400 2.400v9a2.400 2.400 0 0 1-2.400 2.400h-3M1619.500 54.400v19"/>
</g>
<!-- favorites -->
<g class="ic" style="stroke-width:1.500">
<path d="M1680.500 60.300l-3.400-.5l-2.900-5.600l-2.800 5.700l-6.300.9l4.600 4.400l-1.100 6.300l5.600-3l1.600.8"/>
<path d="M1678.500 61.500h6.200M1678.500 65.100h6.200M1678.500 68.700h6.200" stroke-width="1.300"/>
</g>
<!-- collections -->
<g class="ic" style="stroke-width:1.500">
<rect x="1726.700" y="60.700" width="13" height="13" rx="2.600"/>
<path d="M1733.200 63.700v7M1729.700 67.200h7"/>
<path d="M1724 68.200l-.8.200a2 2 0 0 1-2.300-1.600l-1.400-9.200a2 2 0 0 1 1.600-2.300l9.200-1.400a2 2 0 0 1 2.300 1.600l.4 2.300"/>
</g>
<!-- heart -->
<g class="ic" style="stroke-width:1.500">
<path d="M1776 62.500a5 5 0 0 1 9-4.800a5 5 0 0 1 9 4.800M1779.500 67l4.700 4.800"/>
<path d="M1775.400 64.500h4.400l2.200-4.200l3 6.800l2-2.600h7.500"/>
</g>
<circle cx="1790.600" cy="70.600" r="4.700" fill="#13871c"/>
<path d="M1788.400 70.700l1.600 1.600l3-3.200" fill="none" stroke="#fff" stroke-width="1.200" stroke-linecap="round" stroke-linejoin="round"/>
<!-- more -->
<circle cx="1832.500" cy="63.700" r="1.700" fill="#1b1b1b"/><circle cx="1840.200" cy="63.700" r="1.700" fill="#1b1b1b"/><circle cx="1848" cy="63.700" r="1.700" fill="#1b1b1b"/>
<!-- copilot -->
<defs>
<linearGradient id="cp1" x1=".3" y1="0" x2=".5" y2="1"><stop offset="0" stop-color="#0aa3df"/><stop offset=".55" stop-color="#1bbdc0"/><stop offset="1" stop-color="#55e28c"/></linearGradient>
<linearGradient id="cp2" x1=".6" y1="0" x2=".4" y2="1"><stop offset="0" stop-color="#2c78de"/><stop offset=".6" stop-color="#1d98f0"/><stop offset="1" stop-color="#16b8f6"/></linearGradient>
<linearGradient id="cp3" x1="0" y1="0" x2="1" y2="1"><stop offset="0" stop-color="#0b5f8e"/><stop offset="1" stop-color="#1683c4"/></linearGradient>
<linearGradient id="cp4" x1="0" y1="0" x2="1" y2="1"><stop offset="0" stop-color="#3a6cf0"/><stop offset="1" stop-color="#1b3fc8"/></linearGradient>
</defs>
<path d="M1893.500 58.400L1895.500 51.500Q1895.700 50.800 1896.800 50.800C1899.800 50.800 1900.300 52.600 1900.900 54.800C1901.400 56.600 1902 57.800 1904.500 57.800H1897.300L1896.800 58.400Z" fill="url(#cp3)"/>
<path d="M1893.200 69.700L1891.300 76.200Q1891.100 76.800 1890 76.800C1887.200 76.800 1886.600 75 1886 73C1885.500 71.200 1885 69.700 1882.500 69.700Z" fill="url(#cp4)"/>
<path d="M1886.200 50.800H1896.400C1895.600 50.800 1895.200 51.500 1894.900 52.500L1890.600 67.400C1890.100 69 1889.200 69.700 1887.600 69.700H1881.400C1878.600 69.700 1877.400 67.800 1878.200 64.900L1880.800 55.600C1881.700 52.400 1883.400 50.800 1886.200 50.800Z" fill="url(#cp1)"/>
<path d="M1900.600 76.800H1890.400C1891.200 76.800 1891.600 76.100 1891.900 75.100L1896.200 60.100C1896.700 58.500 1897.600 57.800 1899.200 57.800H1904.800C1907.600 57.800 1908.800 59.700 1908 62.600L1905.400 71.900C1904.500 75.100 1902.800 76.800 1900.600 76.800Z" fill="url(#cp2)"/>
</svg>
<svg class="abs" style="left:0;top:0;z-index:5" width="1919" height="1026" viewBox="0 0 1919 1026">
<defs>
<radialGradient id="lens" cx=".4" cy=".35" r=".7"><stop offset="0" stop-color="#f4fbff"/><stop offset="1" stop-color="#a9d4f5"/></radialGradient>
<linearGradient id="m1" x1=".7" y1="0" x2=".3" y2="1"><stop offset="0" stop-color="#b678e8"/><stop offset=".5" stop-color="#6f7be0"/><stop offset="1" stop-color="#3a7be0"/></linearGradient>
<linearGradient id="m2" x1="0" y1="0" x2="1" y2="1"><stop offset="0" stop-color="#3f72d8"/><stop offset=".6" stop-color="#3fa8ea"/><stop offset="1" stop-color="#45f0ff"/></linearGradient>
<linearGradient id="m3" x1="0" y1="0" x2="1" y2="0"><stop offset=".25" stop-color="#d193f5"/><stop offset=".6" stop-color="#a070d0"/><stop offset="1" stop-color="#7050a8"/></linearGradient>
</defs>
<path d="M1894.300 118.200l5.600 5.400" stroke="#c22fd6" stroke-width="3.400" stroke-linecap="round"/><circle cx="1889" cy="112.800" r="6.400" fill="url(#lens)" stroke="#5b5b5b" stroke-width="2"/>
<clipPath id="hexc"><path d="M1890.35 155.60Q1892.60 154.30 1894.85 155.60L1900.05 158.60Q1902.30 159.90 1902.30 162.50L1902.30 168.50Q1902.30 171.10 1900.05 172.40L1894.85 175.40Q1892.60 176.70 1890.35 175.40L1885.15 172.40Q1882.90 171.10 1882.90 168.50L1882.90 162.50Q1882.90 159.90 1885.15 158.60Z"/></clipPath>
<g clip-path="url(#hexc)">
<rect x="1880" y="153" width="26" height="26" fill="url(#m3)"/>
<path d="M1889.400 153L1880 158V174L1886 172.600L1892.100 169.400L1889 165.500L1889.100 155.500Z" fill="url(#m1)"/>
<path d="M1889.400 153.500L1889.100 162.700L1896.100 163.800L1902.400 167.700L1906 160L1893 153Z" fill="url(#m2)"/>
<path d="M1889.300 155.500V162.600L1890.400 161.800V155.800Z" fill="#123f9a" opacity=".7"/>
<path d="M1886 172.500L1892 169.500L1890.600 168.900L1885.500 171.600Z" fill="#123f9a" opacity=".7"/>
<path d="M1896.100 163.800L1902.400 167.800L1902.300 169L1896.200 165.200Z" fill="#5a2a90" opacity=".6"/>
</g>
<circle cx="1892.400" cy="165.400" r="3.500" fill="#f7f7f7"/>
<path d="M1887.300 205.200H1900a1.200 1.200 0 0 1 1.200 1.200V216H1886.100V206.400a1.200 1.200 0 0 1 1.200-1.200z" fill="#28a8ea"/><path d="M1893.600 206.800H1901.200V216H1893.600z" fill="#4fd8ff"/><path d="M1887.300 205.200H1900a1.200 1.200 0 0 1 1.200 1.200V206.900H1886.100V206.400a1.200 1.200 0 0 1 1.200-1.200z" fill="#0f6cbd"/><path d="M1885 214.800L1901.200 214.800L1903 216V224.500a1.200 1.200 0 0 1-1.200 1.200H1886.200a1.200 1.200 0 0 1-1.200-1.200z" fill="#1ea7ee"/><path d="M1894 213H1901.200V215.400L1896.500 218.300z" fill="#35c0f6"/><path d="M1903 215.800V225a.8.800 0 0 1-.6.700L1896.200 218.800z" fill="#1590e0"/><path d="M1896 218.600L1902.200 214.900" stroke="#0a3f8f" stroke-width=".9" fill="none"/><rect x="1883.200" y="210.200" width="12.800" height="12.800" rx="1.500" fill="#0a3a66" opacity=".45"/><rect x="1882.200" y="209" width="13" height="13" rx="1.500" fill="#0f74d0"/><ellipse cx="1888.900" cy="215.400" rx="3.500" ry="3.700" fill="none" stroke="#fff" stroke-width="1.400"/>
<path d="M1884.600 269.100h14.800M1892 261.700v14.800" stroke="#1b1b1b" stroke-width="1.300" fill="none"/>
<path d="M1875.200 874.600h34.800" stroke="#c6c6c6" stroke-width="1"/>
<g fill="none" stroke="#1b1b1b" stroke-width="1.400" stroke-linecap="round" stroke-linejoin="round">
<rect x="1884.300" y="895.400" width="16.400" height="13.800" rx="2.600"/><path d="M1895.900 895.400v13.800"/>
<path d="M1891.500 947.400h-3.300a2.800 2.800 0 0 0-2.800 2.800v6a2.800 2.800 0 0 0 2.800 2.800h8a2.800 2.800 0 0 0 2.800-2.800v-3M1893.600 945.600h5.700v5.700M1899.100 945.800l-7.300 7.300"/>
<path d="M1890.90 995.20L1891.19 992.40L1894.01 992.40L1894.30 995.20L1896.41 996.08L1898.60 994.30L1900.60 996.30L1898.82 998.49L1899.70 1000.60L1902.50 1000.89L1902.50 1003.71L1899.70 1004.00L1898.82 1006.11L1900.60 1008.30L1898.60 1010.30L1896.41 1008.52L1894.30 1009.40L1894.01 1012.20L1891.19 1012.20L1890.90 1009.40L1888.79 1008.52L1886.60 1010.30L1884.60 1008.30L1886.38 1006.11L1885.50 1004.00L1882.70 1003.71L1882.70 1000.89L1885.50 1000.60L1886.38 998.49L1884.60 996.30L1886.60 994.30L1888.79 996.08Z"/><circle cx="1892.600" cy="1002.300" r="2.800"/>
<g stroke="#333" stroke-width="1.300"><path d="M1794.700 1003.700v-1a2.200 2.200 0 0 1 2.200-2.200h8.400a2.200 2.200 0 0 1 2.200 2.200v3" stroke-dasharray="2.200 2"/><rect x="1794.700" y="1006.500" width="12.800" height="8" rx="1.800"/><path d="M1791.700 1001.400a4.400 4.400 0 0 0 0 8M1789.300 1004v-3h3"/></g>
<g stroke="#333" stroke-width="1.300"><rect x="1830.800" y="1000.500" width="19.200" height="14" rx="2.400"/><path d="M1830.800 1010.200h19.200M1840.400 1009v-5.200M1837.800 1006l2.600-2.600l2.600 2.600"/></g>
</g></svg>
</body>
</html>
